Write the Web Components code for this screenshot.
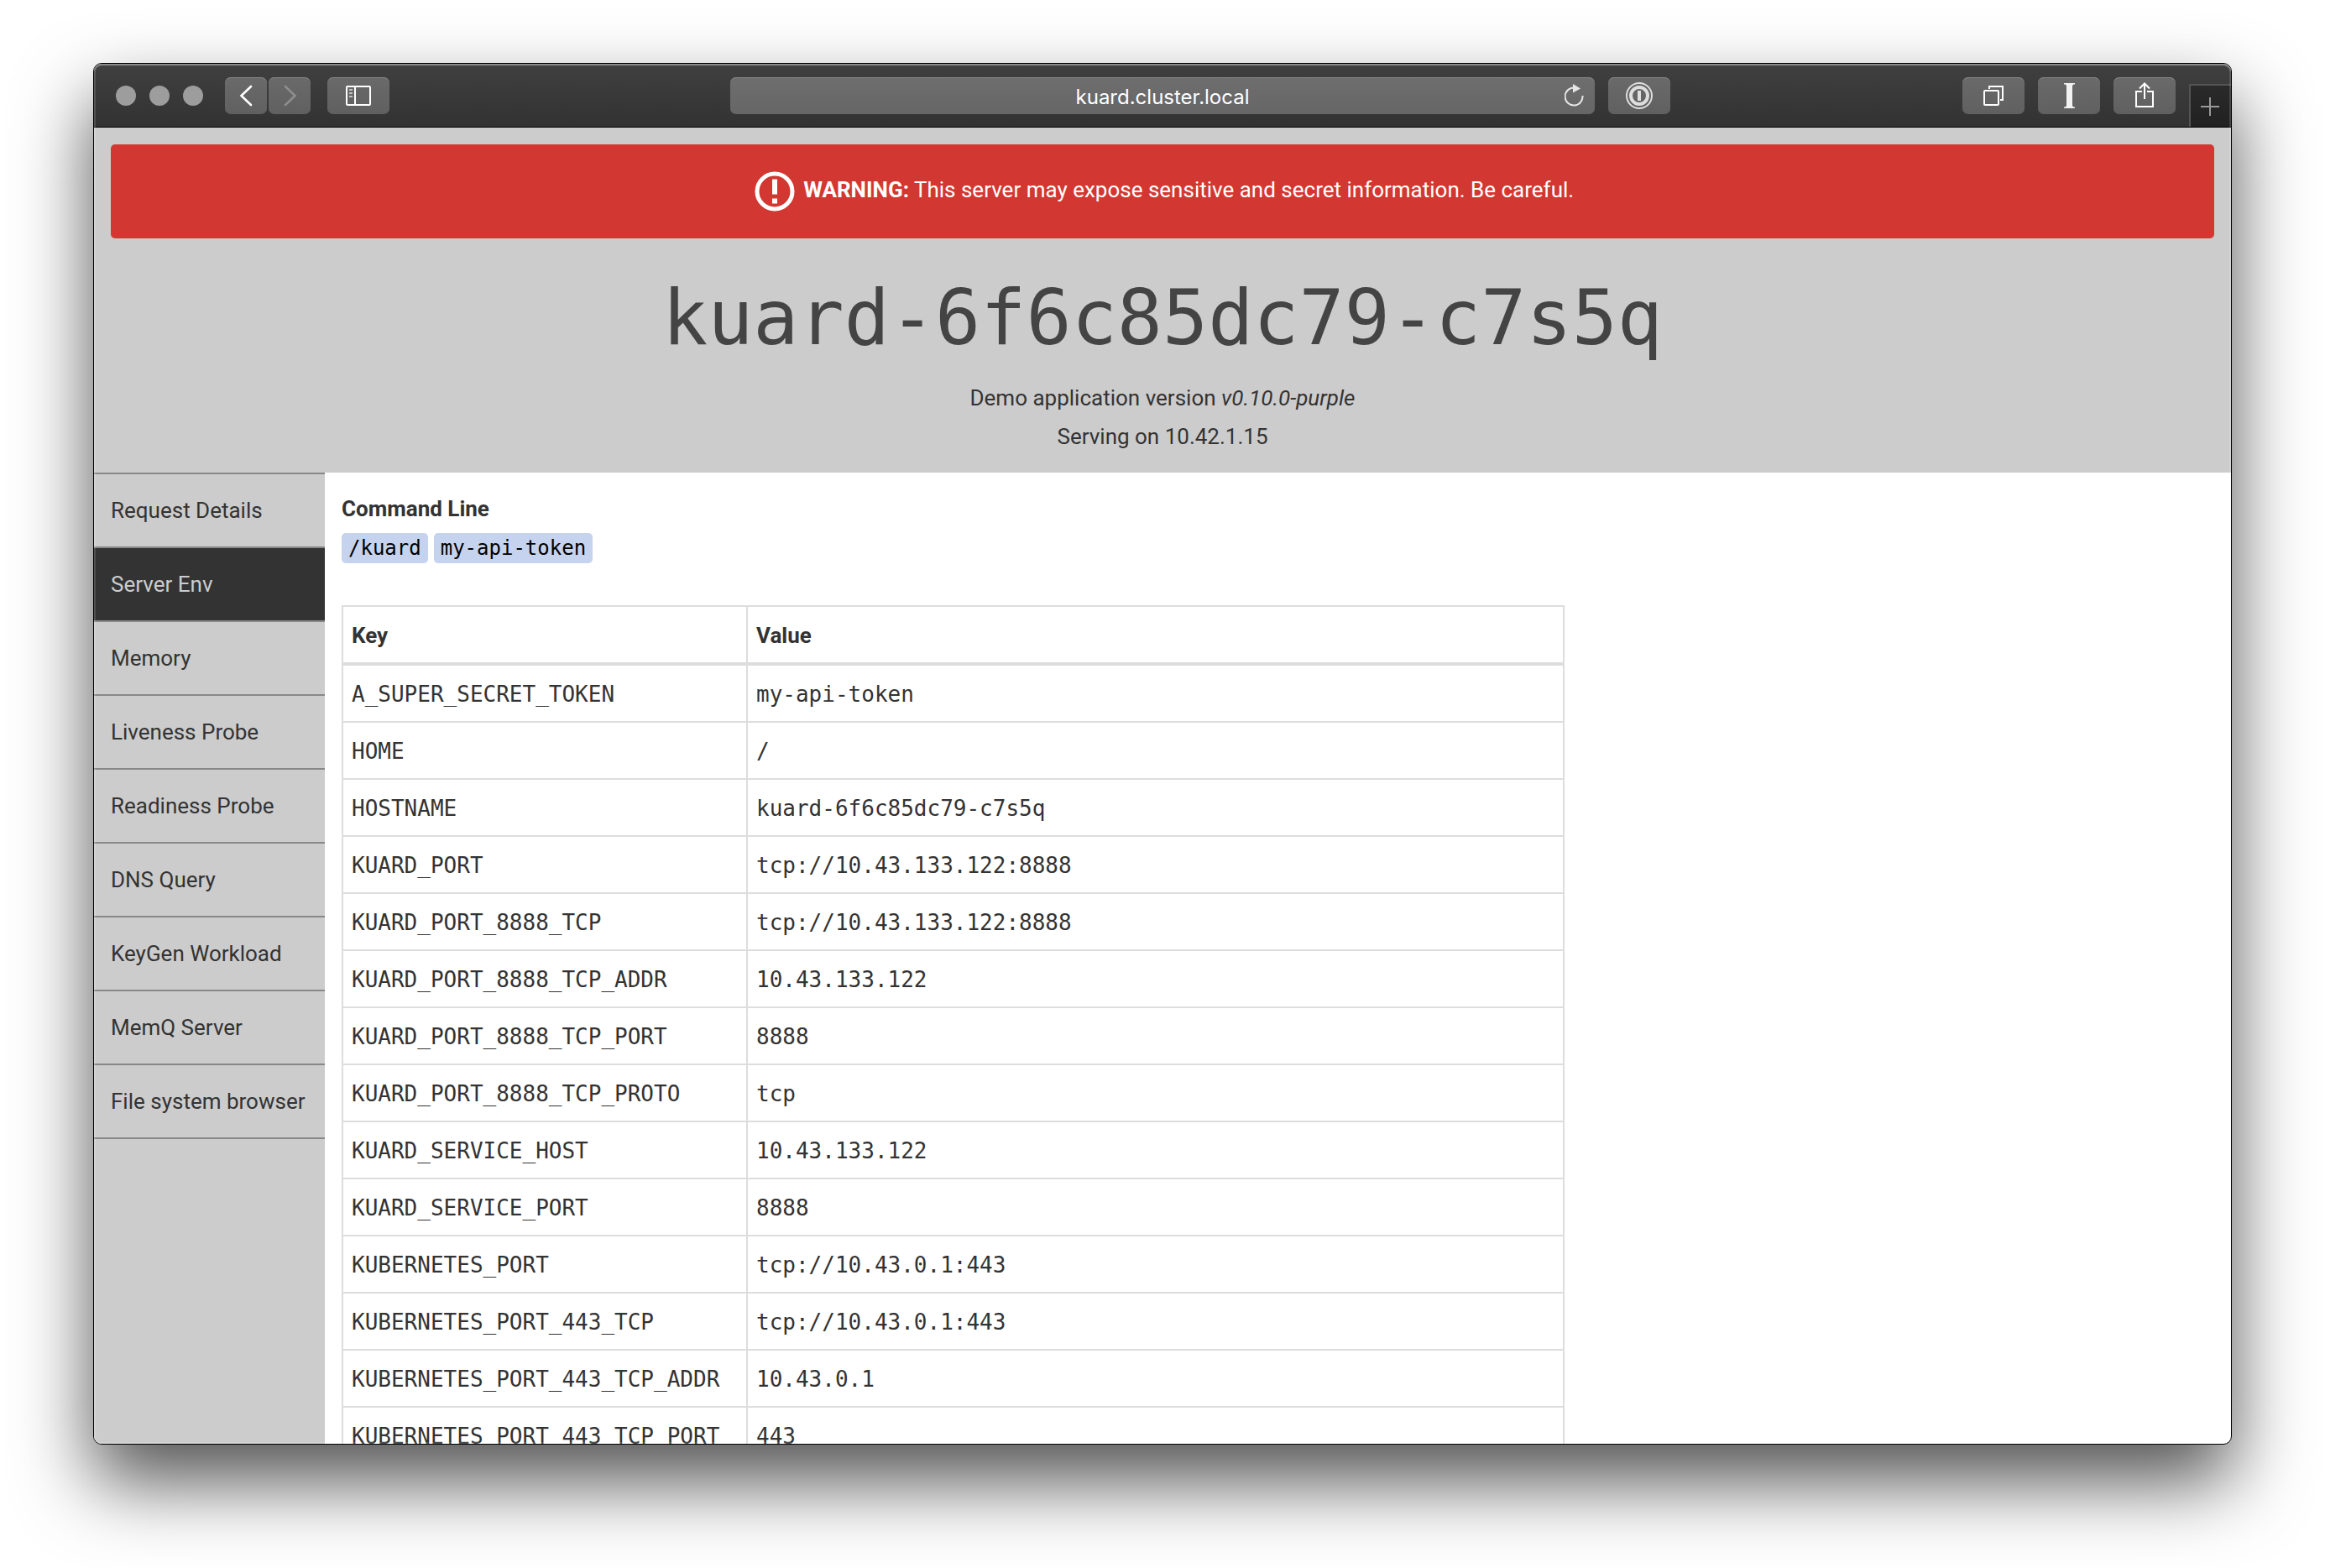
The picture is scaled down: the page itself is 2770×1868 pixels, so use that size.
<!DOCTYPE html>
<html lang="en">
<head>
<meta charset="utf-8">
<title>kuard</title>
<style>
  * { box-sizing: border-box; }
  html, body { margin: 0; height: 100%; }
  body {
    display: flex;
    padding: 75px 111px 147px;
    background: #fff;
    color: #333;
    font: 26px/46px Roboto, "Liberation Sans", sans-serif;
    overflow: hidden;
  }
</style>
</head>
<body>
<browser-window>
  <browser-toolbar slot="toolbar" address="kuard.cluster.local"></browser-toolbar>
  <kuard-app>
    <warning-banner slot="header"><strong>WARNING:</strong> This server may expose sensitive and secret information. Be careful.</warning-banner>
    <app-title slot="header" name="kuard-6f6c85dc79-c7s5q">
      <div>Demo application version <i>v0.10.0-purple</i></div>
      <div>Serving on 10.42.1.15</div>
    </app-title>
    <side-nav slot="nav">
      <nav-item>Request Details</nav-item>
      <nav-item active>Server Env</nav-item>
      <nav-item>Memory</nav-item>
      <nav-item>Liveness Probe</nav-item>
      <nav-item>Readiness Probe</nav-item>
      <nav-item>DNS Query</nav-item>
      <nav-item>KeyGen Workload</nav-item>
      <nav-item>MemQ Server</nav-item>
      <nav-item>File system browser</nav-item>
    </side-nav>
    <command-line>
      <command-arg>/kuard</command-arg>
      <command-arg>my-api-token</command-arg>
    </command-line>
    <env-table></env-table>
  </kuard-app>
</browser-window>

<script>
const RESET = '*, *::before, *::after { box-sizing: border-box; }';

function define(name, css, html, setup) {
  const template = document.createElement('template');
  template.innerHTML = `<style>${RESET}${css}</style>${html}`;
  customElements.define(name, class extends HTMLElement {
    constructor() {
      super();
      this.attachShadow({ mode: 'open' }).append(template.content.cloneNode(true));
    }
    connectedCallback() {
      if (setup) setup(this, this.shadowRoot);
    }
  });
}

define('browser-window', `
  :host {
    position: relative;
    display: flex;
    flex-direction: column;
    flex: 1;
    min-width: 0;
    border: 1px solid #000;
    border-radius: 10px;
    overflow: hidden;
    background: #fff;
    box-shadow: 0 44px 90px rgba(0, 0, 0, .68);
  }
  :host::after {
    content: "";
    position: absolute;
    inset: 0;
    border-radius: 9px;
    box-shadow: inset 0 2px 1px rgba(255, 255, 255, .3), inset 0 0 0 2px rgba(255, 255, 255, .14);
    pointer-events: none;
  }
  .view { display: flex; flex-direction: column; flex: 1; min-height: 0; overflow: auto; scrollbar-width: none; }
`, `<slot name="toolbar"></slot><div class="view"><slot></slot></div>`);

define('tool-button', `
  :host { display: block; width: 74px; height: 44px; }
  :host([narrow]) { width: 50px; }
  button {
    display: block;
    width: 100%;
    height: 100%;
    padding: 0;
    border: 0;
    border-radius: 7px;
    background: linear-gradient(#6a6a6a, #606060);
    box-shadow: inset 0 1px 0 #838383;
    color: #fff;
  }
  ::slotted(svg) { display: block; fill: none; stroke: currentColor; stroke-width: 2; }
`, `<button type="button"><slot></slot></button>`, (host, root) => {
  root.querySelector('button').setAttribute('aria-label', host.getAttribute('label'));
});

define('browser-toolbar', `
  :host {
    display: grid;
    grid-template-columns: 1fr minmax(0, 1030px) 1fr;
    align-items: start;
    flex: none;
    height: 76px;
    padding: 16px 0 0;
    border-bottom: 1px solid #000;
    background: linear-gradient(#404040, #323232);
  }
  .left, .right, .lights, .history { display: flex; }
  .left { align-items: center; padding-left: 26px; }
  .lights { gap: 16px; margin-right: 26px; }
  .lights span { width: 24px; height: 24px; border-radius: 50%; background: #9d9d9d; }
  .history { gap: 2px; margin-right: 20px; }
  .address {
    display: flex;
    align-items: center;
    height: 44px;
    padding: 0 12px;
    border-radius: 7px;
    background: linear-gradient(#6e6e6e, #666);
    box-shadow: inset 0 1px 0 #858585;
  }
  .address input {
    flex: 1;
    min-width: 0;
    height: 44px;
    padding: 2px 0 0 24px;
    border: 0;
    outline: 0;
    background: none;
    color: #fff;
    font: 24px/42px Inter, sans-serif;
    text-align: center;
  }
  .address button { width: 24px; height: 44px; padding: 0; border: 0; background: none; }
  .address svg { display: block; }
  .right { gap: 16px; padding-left: 16px; }
  .right .push { margin-left: auto; }
  .tab {
    width: 50px;
    height: 51px;
    margin-top: 8px;
    padding: 0;
    border: solid #545454;
    border-width: 2px 0 0 2px;
    background: linear-gradient(#2a2a2a, #212121);
  }
  .tab svg { display: block; }
`, `
  <div class="left">
    <div class="lights"><span></span><span></span><span></span></div>
    <div class="history">
      <tool-button narrow label="Back"><svg width="50" height="44"><path d="M31 11L19.500 22L31 33" stroke-width="2.600" stroke-linecap="round"/></svg></tool-button>
      <tool-button narrow label="Forward"><svg width="50" height="44"><path d="M20 11L31.500 22L20 33" stroke="#8e8e8e" stroke-width="2.600" stroke-linecap="round"/></svg></tool-button>
    </div>
    <tool-button label="Sidebar"><svg width="74" height="44"><rect x="23" y="11" width="28" height="22" rx="1"/><path d="M33 11V33"/><path d="M26 15H30M26 19H30M26 23H30" stroke="#c4c4c4"/></svg></tool-button>
  </div>
  <div class="address">
    <input type="text" aria-label="Address">
    <button type="button" aria-label="Reload"><svg width="24" height="44"><path d="M21.500 22A10.500 10.500 0 1 1 11 12.500" fill="none" stroke="#e6e6e6" stroke-width="2"/><path d="M10 8V18.500L19 13.500Z" fill="#e6e6e6"/></svg></button>
  </div>
  <div class="right">
    <tool-button label="Passwords"><svg width="74" height="44" style="color:#dedede"><circle cx="37" cy="22" r="15"/><circle cx="37" cy="22" r="10" stroke-width="4"/><path d="M37 16V28" stroke-width="4"/></svg></tool-button>
    <tool-button class="push" label="Show tabs"><svg width="74" height="44"><rect x="26" y="16" width="17" height="17" rx="1"/><path d="M32 14V11H48V27H45"/></svg></tool-button>
    <tool-button label="Read later"><svg width="74" height="44"><g fill="#f2f2f2" stroke="none"><rect x="31" y="7" width="13" height="1.500"/><rect x="33" y="8" width="9" height="1.500"/><rect x="34" y="8" width="7" height="28"/><rect x="33" y="34.500" width="9" height="1.500"/><rect x="31" y="35.500" width="13" height="1.500"/></g></svg></tool-button>
    <tool-button label="Share"><svg width="74" height="44"><path d="M34 17H27V35H47V17H40M37 26V8M31 13.500L37 7.500L43 13.500"/></svg></tool-button>
    <button class="tab" type="button" aria-label="New tab"><svg width="48" height="49"><path d="M23 14V36M12 25H34" stroke="#9a9a9a" stroke-width="2"/></svg></button>
  </div>
`, (host, root) => {
  root.querySelector('input').value = host.getAttribute('address');
});

define('kuard-app', `
  :host { display: flex; flex-direction: column; flex: 1; min-height: 0; }
  header { flex: none; padding: 20px; background: #ccc; text-align: center; }
  .body { display: flex; flex: 1; min-height: 0; }
  main { flex: 1; min-width: 0; padding: 20px; }
`, `
  <header><slot name="header"></slot></header>
  <div class="body">
    <slot name="nav"></slot>
    <main><slot></slot></main>
  </div>
`);

define('warning-banner', `
  :host { display: block; padding: 28px; border-radius: 5px; background: #d33731; color: #fff; }
  p { margin: 0; height: 56px; }
  svg { width: 56px; height: 56px; vertical-align: middle; }
`, `<p role="alert"><svg viewBox="0 0 56 56" aria-hidden="true"><circle cx="28" cy="28" r="21" fill="none" stroke="#fff" stroke-width="5"/><path d="M25 13.500H31V31.500H25ZM25 36.500H31V42.500H25Z" fill="#fff"/></svg> <slot></slot></p>`);

define('app-title', `
  :host { display: block; padding-top: 23px; }
  h1 { margin: 0; color: #444; font: 90px/144px "DejaVu Sans Mono", monospace; }
`, `<h1></h1><slot></slot>`, (host, root) => {
  root.querySelector('h1').textContent = host.getAttribute('name');
});

define('side-nav', `
  :host { display: block; flex: none; width: 275px; background: #ccc; }
  nav { border-top: 2px solid #888; }
`, `<nav><slot></slot></nav>`);

define('nav-item', `
  :host { display: block; border-bottom: 2px solid #888; }
  a { display: block; padding: 20px; color: #333; text-decoration: none; white-space: nowrap; }
  :host([active]) a { background: #333; color: #ccc; }
`, `<a href="#"><slot></slot></a>`);

define('command-line', `
  :host { display: block; margin-bottom: 44px; }
  h2 { margin: 0; font-size: 26px; line-height: 46px; font-weight: 700; }
  div { display: flex; align-items: center; gap: 7px; height: 48px; }
`, `<h2>Command Line</h2><div><slot></slot></div>`);

define('command-arg', `
  :host {
    display: block;
    padding: 0 8px;
    border-radius: 5px;
    background: #c6d3ee;
    color: #000;
    font: 24px/36px "DejaVu Sans Mono", monospace;
  }
`, `<slot></slot>`);

const ENV = [
  ['A_SUPER_SECRET_TOKEN', 'my-api-token'],
  ['HOME', '/'],
  ['HOSTNAME', 'kuard-6f6c85dc79-c7s5q'],
  ['KUARD_PORT', 'tcp://10.43.133.122:8888'],
  ['KUARD_PORT_8888_TCP', 'tcp://10.43.133.122:8888'],
  ['KUARD_PORT_8888_TCP_ADDR', '10.43.133.122'],
  ['KUARD_PORT_8888_TCP_PORT', '8888'],
  ['KUARD_PORT_8888_TCP_PROTO', 'tcp'],
  ['KUARD_SERVICE_HOST', '10.43.133.122'],
  ['KUARD_SERVICE_PORT', '8888'],
  ['KUBERNETES_PORT', 'tcp://10.43.0.1:443'],
  ['KUBERNETES_PORT_443_TCP', 'tcp://10.43.0.1:443'],
  ['KUBERNETES_PORT_443_TCP_ADDR', '10.43.0.1'],
  ['KUBERNETES_PORT_443_TCP_PORT', '443'],
];

define('env-table', `
  :host { display: block; }
  table { width: 1457px; max-width: 100%; border-collapse: collapse; table-layout: fixed; }
  th, td { padding: 11px 10px 9px; border: 2px solid #ddd; text-align: left; }
  th { border-bottom-width: 4px; font-weight: 700; }
  th:first-child { width: 482px; }
  td { font-family: "DejaVu Sans Mono", monospace; }
`, `<table><thead><tr><th>Key</th><th>Value</th></tr></thead><tbody></tbody></table>`, (host, root) => {
  const body = root.querySelector('tbody');
  for (const pair of ENV) {
    const row = body.insertRow();
    for (const text of pair) row.insertCell().textContent = text;
  }
});
</script>
</body>
</html>
